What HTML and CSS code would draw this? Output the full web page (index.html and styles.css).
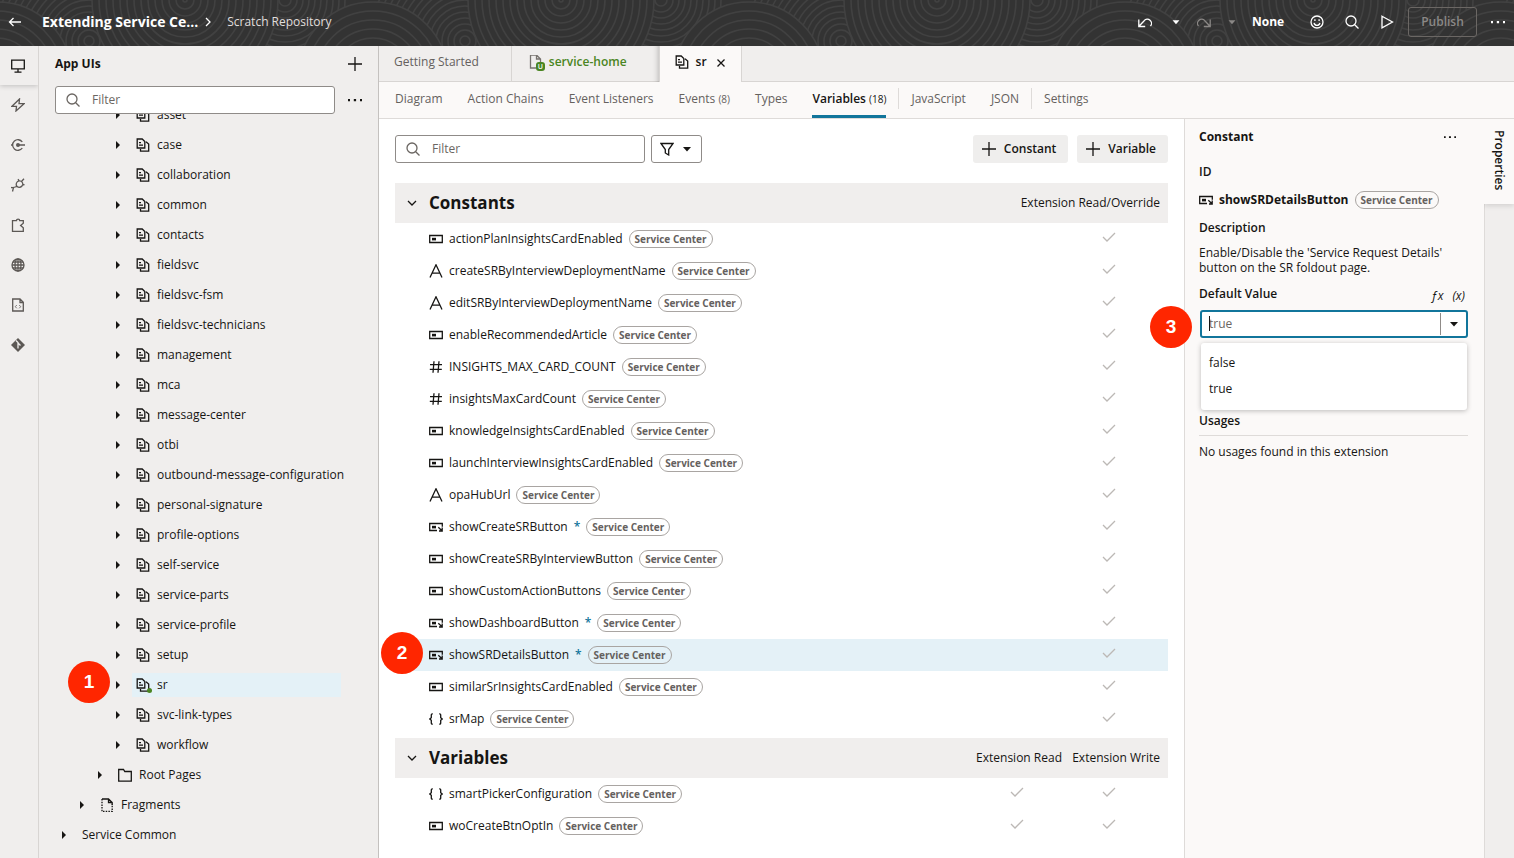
FILE: index.html
```
<!DOCTYPE html>
<html lang="en">
<head>
  <meta charset="UTF-8" />
  <meta name="viewport" content="width=device-width, initial-scale=1" />
  <title>sr - Variables</title>
  <link rel="stylesheet" href="styles.css">
</head>
<body>

  <!-- Icon sprite -->
  <svg class="sprite" aria-hidden="true">
    <symbol id="i-back" viewBox="0 0 14 14"><path d="M13 7H1.5M5.5 3l-4 4 4 4"/></symbol>
    <symbol id="i-chevron" viewBox="0 0 14 14"><path d="M5 3l4 4-4 4"/></symbol>
    <symbol id="i-down" viewBox="0 0 14 14"><path d="M3 5l4 4 4-4"/></symbol>
    <symbol id="i-caret" viewBox="0 0 14 14"><path class="solid" d="M3 5h8L7 9.500z"/></symbol>
    <symbol id="i-right" viewBox="0 0 14 14"><path class="solid" d="M5 3l4 4-4 4z"/></symbol>
    <symbol id="i-undo" viewBox="0 0 14 14"><path d="M.8 4.500v7h6.400M1 11.300l5.200-5.600a3.900 3.900 0 0 1 6.300 5.300"/></symbol>
    <symbol id="i-redo" viewBox="0 0 14 14"><path d="M13.200 4.500v7H6.800M13 11.300L7.800 5.700A3.900 3.900 0 0 0 1.500 11"/></symbol>
    <symbol id="i-smile" viewBox="0 0 14 14"><circle cx="7" cy="7" r="6"/><path d="M4 8a3.100 3.100 0 0 0 6 0M4.900 4.300v1.600M9.100 4.300v1.600"/></symbol>
    <symbol id="i-search" viewBox="0 0 14 14"><circle cx="6" cy="6" r="5"/><path d="M9.700 9.700l3.800 3.800"/></symbol>
    <symbol id="i-play" viewBox="0 0 14 14"><path d="M2 1.200l10.500 5.800L2 12.800z"/></symbol>
    <symbol id="i-dots" viewBox="0 0 14 14"><path class="solid" d="M-.3 6h2.300v2.300H-.3zM5.800 6h2.300v2.300H5.800zM12 6h2.300v2.300H12z"/></symbol>
    <symbol id="i-plus" viewBox="0 0 14 14"><path d="M7 0v14M0 7h14"/></symbol>
    <symbol id="i-close" viewBox="0 0 14 14"><path d="M3.500 4.500l7 7M10.500 4.500l-7 7"/></symbol>
    <symbol id="i-filter" viewBox="0 0 14 14"><path d="M1 1.500h12L8.700 7.500V13l-3.400-2V7.500z"/></symbol>
    <symbol id="i-check" viewBox="0 0 14 14"><path d="M1 7l4 4 8-8"/></symbol>
    <symbol id="i-monitor" viewBox="0 0 14 14"><path d="M.7 1.200h12.600v8.600H.7zM7 10v3M3.500 13.200h7"/></symbol>
    <symbol id="i-bolt" viewBox="0 0 14 14"><path d="M8.500 1L1 8.300h4.500L5 13l8-7.300H8z"/></symbol>
    <symbol id="i-service" viewBox="0 0 14 14"><path d="M11.300 4A5.300 5.300 0 1 0 11.300 10M7 7h7M0 7h1.500"/><circle class="solid" cx="7" cy="7" r="2"/></symbol>
    <symbol id="i-plug" viewBox="0 0 14 14"><path d="M5.200 6.800c-.2-2.600 2-4.600 4.300-3.800s3 3.300 1.500 5-4.300 1.800-5.300.2zM8.200 2.800L7 1.200M11.300 6l2.200.8M10.700 3.300L13 .8M5.500 8.500c-1.500.8-2.500 1.300-5 1M2.500 9.700L1.500 13.500M0 9.700h3"/></symbol>
    <symbol id="i-puzzle" viewBox="0 0 14 14"><path d="M1.500 2.700h4a1.600 1.600 0 0 1 3.200 0h3.600v2.600L9.600 7.500l2.700 2.300v3.500H1.500z"/></symbol>
    <symbol id="i-globe" viewBox="0 0 14 14"><circle cx="7" cy="7" r="6"/><ellipse cx="7" cy="7" rx="3" ry="6"/><path d="M7 1v12M1 7h12M2 4h10M2 10h10"/></symbol>
    <symbol id="i-code" viewBox="0 0 14 14"><path d="M1.700 1H9l3.300 3.300V13H1.700zM9 1v3.500h3.300"/><path class="thin" d="M5.800 7L4.300 8.700l1.500 1.600M8.200 7l1.500 1.700-1.500 1.600"/></symbol>
    <symbol id="i-git" viewBox="0 0 14 14"><path class="solid" d="M7 0l7 7-7 7-7-7z"/><path class="branch" d="M5 2.500l2 2v6M7 5l2.500 2.500"/></symbol>
    <symbol id="i-flow" viewBox="0 0 14 14"><path d="M1.200 1h5l2.600 2.600V10H1.200zM3 4.700h2M3 7.200h4M10 3.700l2.700 2.300v7.200H4.500V11"/></symbol>
    <symbol id="i-folder" viewBox="0 0 14 14"><path d="M.7 1.500h4.800l1.300 2h6.500v9.700H.7z"/></symbol>
    <symbol id="i-fragment" viewBox="0 0 14 14"><path d="M2 1h6.500l3.700 3.500V7M8.500 1v3.500h3.700"/><path stroke-dasharray="1.500 1.200" d="M2 1v12.500h10.200V6"/></symbol>
    <symbol id="i-page" viewBox="0 0 14 14"><path d="M7 13H1.500V0h6l4 4v4M7.500 0v4h4"/></symbol>
    <symbol id="i-bool" viewBox="0 0 14 14"><path d="M.7 3.500h12.600v7H.7z"/><path class="solid" d="M3 5.800h4v2.600H3z"/></symbol>
    <symbol id="i-boolx" viewBox="0 0 14 14"><path d="M8 10.500H.7v-7h12.600v3.200M9.300 7.300l3.700 3.400M13.200 7.500v3.500H10"/><path class="solid" d="M3 5.800h4v2.600H3z"/></symbol>
    <symbol id="i-string" viewBox="0 0 14 14"><path d="M1 13.500L7 .8l6 12.700M3.200 9.200h7.600"/></symbol>
    <symbol id="i-number" viewBox="0 0 14 14"><path d="M5 1.200L4 12.800M10 1.200L9 12.800M1 4.700h12M.8 9.300h12"/></symbol>
    <symbol id="i-object" viewBox="0 0 14 14"><path d="M3.800 1.800H3.300Q2.300 1.800 2.300 2.800v2.900L.8 7l1.500 1.300v2.900q0 1 1 1h.5M10.200 1.800h.5q1 0 1 1v2.900L13.200 7l-1.500 1.300v2.900q0 1-1 1h-.5"/></symbol>
  </svg>

  <header class="topbar">
    <svg class="topbar-art" aria-hidden="true">
      <defs>
        <pattern id="rings" width="376" height="46" x="-3" patternUnits="userSpaceOnUse"></pattern>
      </defs>
      <rect width="100%" height="100%" fill="url(#rings)"/>
    </svg>
    <button class="icon-btn back" aria-label="Back"><svg class="icon"><use href="#i-back"/></svg></button>
    <h1>Extending Service Ce...</h1>
    <svg class="icon crumb"><use href="#i-chevron"/></svg>
    <a href="#" class="repo">Scratch Repository</a>
    <div class="actions">
      <button class="icon-btn" aria-label="Undo"><svg class="icon"><use href="#i-undo"/></svg></button>
      <button class="icon-btn tiny" aria-label="Undo history"><svg class="icon small"><use href="#i-caret"/></svg></button>
      <button class="icon-btn tiny" aria-label="Redo" disabled><svg class="icon"><use href="#i-redo"/></svg></button>
      <button class="icon-btn tiny" aria-label="Redo history" disabled><svg class="icon small"><use href="#i-caret"/></svg></button>
      <button class="env">None</button>
      <button class="icon-btn" aria-label="Feedback"><svg class="icon"><use href="#i-smile"/></svg></button>
      <button class="icon-btn" aria-label="Search"><svg class="icon"><use href="#i-search"/></svg></button>
      <button class="icon-btn" aria-label="Preview"><svg class="icon"><use href="#i-play"/></svg></button>
      <button class="publish" disabled>Publish</button>
      <button class="icon-btn more" aria-label="More"><svg class="icon"><use href="#i-dots"/></svg></button>
    </div>
  </header>

  <div class="workspace">
    <nav class="rail" aria-label="Navigator">
      <button class="active" aria-label="App UIs"><svg class="icon"><use href="#i-monitor"/></svg></button>
      <button aria-label="Actions"><svg class="icon"><use href="#i-bolt"/></svg></button>
      <button aria-label="Services"><svg class="icon"><use href="#i-service"/></svg></button>
      <button aria-label="Connections"><svg class="icon"><use href="#i-plug"/></svg></button>
      <button aria-label="Components"><svg class="icon"><use href="#i-puzzle"/></svg></button>
      <button aria-label="Translations"><svg class="icon"><use href="#i-globe"/></svg></button>
      <button aria-label="Source"><svg class="icon"><use href="#i-code"/></svg></button>
      <button aria-label="Git"><svg class="icon"><use href="#i-git"/></svg></button>
    </nav>

    <aside class="sidebar">
      <div class="side-head">
        <h2>App UIs</h2>
        <button aria-label="Add"><svg class="icon"><use href="#i-plus"/></svg></button>
      </div>
      <div class="side-filter">
        <label class="search">
          <svg class="icon"><use href="#i-search"/></svg>
          <input type="text" placeholder="Filter" aria-label="Filter App UIs">
        </label>
        <button aria-label="More"><svg class="icon"><use href="#i-dots"/></svg></button>
      </div>
      <div class="tree-wrap">
        <ul class="tree" id="tree"></ul>
      </div>
    </aside>

    <div class="editor">
      <div class="tabs">
        <button class="tab first">Getting Started</button>
        <button class="tab home"><span class="page-icon"><svg class="icon"><use href="#i-page"/></svg><span class="u">U</span></span>service-home</button>
        <button class="tab current"><svg class="icon"><use href="#i-flow"/></svg>sr<svg class="icon"><use href="#i-close"/></svg></button>
      </div>
      <nav class="subnav">
        <a href="#">Diagram</a>
        <a href="#">Action Chains</a>
        <a href="#">Event Listeners</a>
        <a href="#">Events <small>(8)</small></a>
        <a href="#">Types</a>
        <a href="#" class="current">Variables <small>(18)</small></a>
        <a href="#" class="divided">JavaScript</a>
        <a href="#">JSON</a>
        <a href="#" class="divided">Settings</a>
      </nav>

      <div class="panes">
        <main class="content">
          <div class="toolbar">
            <label class="search">
              <svg class="icon"><use href="#i-search"/></svg>
              <input type="text" placeholder="Filter" aria-label="Filter variables">
            </label>
            <button class="filter-btn" aria-label="Filter options"><svg class="icon"><use href="#i-filter"/></svg><svg class="icon"><use href="#i-caret"/></svg></button>
            <div class="add">
              <button><svg class="icon"><use href="#i-plus"/></svg>Constant</button>
              <button><svg class="icon"><use href="#i-plus"/></svg>Variable</button>
            </div>
          </div>

          <table>
            <thead>
              <tr>
                <th><button class="toggle"><svg class="icon"><use href="#i-down"/></svg>Constants</button></th>
                <th class="override">Extension Read/Override</th>
              </tr>
            </thead>
            <tbody id="constants"></tbody>
          </table>

          <table>
            <thead>
              <tr>
                <th><button class="toggle"><svg class="icon"><use href="#i-down"/></svg>Variables</button></th>
                <th class="read">Extension Read</th>
                <th class="write">Extension Write</th>
              </tr>
            </thead>
            <tbody id="variables"></tbody>
          </table>
        </main>

        <aside class="props">
          <div class="props-head">
            <h2>Constant</h2>
            <button aria-label="More"><svg class="icon small"><use href="#i-dots"/></svg></button>
          </div>
          <h3>ID</h3>
          <div class="prop-id">
            <svg class="icon"><use href="#i-boolx"/></svg>
            <strong>showSRDetailsButton</strong>
            <span class="badge">Service Center</span>
          </div>
          <h3>Description</h3>
          <p class="desc">Enable/Disable the 'Service Request Details' button on the SR foldout page.</p>
          <div class="value-head">
            <label for="default-value">Default Value</label>
            <button aria-label="Expression"><i>ƒx</i></button>
            <button aria-label="Variable"><i>(x)</i></button>
          </div>
          <div class="combo">
            <span class="marker three">3</span>
            <input type="text" id="default-value" placeholder="true" role="combobox" aria-expanded="true" aria-controls="value-list">
            <span class="cursor"></span>
            <button aria-label="Open list"><svg class="icon"><use href="#i-caret"/></svg></button>
            <ul class="options" id="value-list" role="listbox">
              <li role="option">false</li>
              <li role="option">true</li>
            </ul>
          </div>
          <h3 class="usages">Usages</h3>
          <p class="none">No usages found in this extension</p>
        </aside>

        <div class="right-rail">
          <button>Properties</button>
        </div>
      </div>
    </div>
  </div>

  <script>
    const flows = ['asset', 'case', 'collaboration', 'common', 'contacts', 'fieldsvc', 'fieldsvc-fsm',
      'fieldsvc-technicians', 'management', 'mca', 'message-center', 'otbi',
      'outbound-message-configuration', 'personal-signature', 'profile-options', 'self-service',
      'service-parts', 'service-profile', 'setup', 'sr', 'svc-link-types', 'workflow'];

    const constants = [
      ['bool', 'actionPlanInsightsCardEnabled'],
      ['string', 'createSRByInterviewDeploymentName'],
      ['string', 'editSRByInterviewDeploymentName'],
      ['bool', 'enableRecommendedArticle'],
      ['number', 'INSIGHTS_MAX_CARD_COUNT'],
      ['number', 'insightsMaxCardCount'],
      ['bool', 'knowledgeInsightsCardEnabled'],
      ['bool', 'launchInterviewInsightsCardEnabled'],
      ['string', 'opaHubUrl'],
      ['boolx', 'showCreateSRButton'],
      ['bool', 'showCreateSRByInterviewButton'],
      ['bool', 'showCustomActionButtons'],
      ['boolx', 'showDashboardButton'],
      ['boolx', 'showSRDetailsButton'],
      ['bool', 'similarSrInsightsCardEnabled'],
      ['object', 'srMap']
    ];

    const variables = [
      ['object', 'smartPickerConfiguration'],
      ['bool', 'woCreateBtnOptIn']
    ];

    function icon(name) {
      return `<svg class="icon"><use href="#i-${name}"/></svg>`;
    }

    function treeItem(name, iconName, level) {
      const selected = name === 'sr';
      return `<li class="level-${level}${selected ? ' selected' : ''}">
        ${selected ? '<span class="marker one">1</span>' : ''}
        ${icon('right')}
        <span class="node">${iconName ? icon(iconName) : ''}${name}</span>
      </li>`;
    }

    function row(type, name, checks) {
      const selected = name === 'showSRDetailsButton';
      const star = type === 'boolx' ? '<span class="star">*</span>' : '';
      return `<tr class="${selected ? 'selected' : ''}">
        <td><div class="var">${selected ? '<span class="marker two">2</span>' : ''}
          ${icon(type)}<span>${name}</span>${star}<span class="badge">Service Center</span></div></td>
        ${`<td class="check">${icon('check')}</td>`.repeat(checks)}
      </tr>`;
    }

    // concentric rings, the biggest one is filled so it hides what is below
    function rings(cx, cy, max, step) {
      let out = '';
      for (let r = max; r > 0; r -= step) {
        out += `<circle cx="${cx}" cy="${cy}" r="${r}"/>`;
      }
      return out;
    }

    document.getElementById('tree').innerHTML =
      flows.map(name => treeItem(name, 'flow', 3)).join('') +
      treeItem('Root Pages', 'folder', 2) +
      treeItem('Fragments', 'fragment', 1) +
      treeItem('Service Common', '', 0);

    document.getElementById('constants').innerHTML = constants.map(c => row(c[0], c[1], 1)).join('');
    document.getElementById('variables').innerHTML = variables.map(v => row(v[0], v[1], 2)).join('');

    document.getElementById('rings').innerHTML =
      rings(92, 41, 95, 6) + rings(288, 0, 60, 6) +
      rings(0, 77, 75, 9) + rings(376, 77, 75, 9) + rings(188, 0, 93, 7);
  </script>

</body>
</html>
```
FILE: styles.css
```
* {
  box-sizing: border-box;
}

body {
  margin: 0;
  height: 100vh;
  display: flex;
  flex-direction: column;
  overflow: hidden;
  font-family: "Open Sans", "Noto Sans", sans-serif;
  font-size: 12px;
  line-height: 16px;
  color: #161513;
  background: #fff;
}

h1, h2, h3, p, ul {
  margin: 0;
  padding: 0;
}

h2, h3 {
  font-size: 12px;
}

ul {
  list-style: none;
}

button, input {
  font: inherit;
  color: inherit;
}

button {
  display: flex;
  align-items: center;
  justify-content: center;
  padding: 0;
  border: 0;
  background: none;
  cursor: pointer;
}

a {
  color: inherit;
  text-decoration: none;
}

.sprite {
  position: absolute;
  width: 0;
  height: 0;
}

.icon {
  width: 14px;
  height: 14px;
  flex: none;
  overflow: visible;
  fill: none;
  stroke: currentColor;
  stroke-width: 1.3;
}

.icon.small {
  width: 12px;
  height: 12px;
}

.solid {
  fill: currentColor;
  stroke: none;
}

.thin {
  stroke-width: 0.8;
}

.branch {
  stroke: #f0eeed;
}

/* top bar */
.topbar {
  position: relative;
  display: flex;
  align-items: center;
  flex: none;
  height: 46px;
  padding: 0 0 2px 8px;
  background: #333;
  color: #fff;
}

.topbar > * {
  position: relative;
}

.topbar .topbar-art {
  position: absolute;
  left: 0;
  top: 0;
  width: 100%;
  height: 100%;
}

.topbar-art circle {
  fill: #333;
  stroke: #414141;
  stroke-width: 1.5;
}

.topbar h1 {
  margin-left: 20px;
  font-size: 14px;
  line-height: 20px;
}

.crumb {
  margin: 0 12px 0 3px;
}

.repo {
  color: #e0dedc;
}

.actions {
  display: flex;
  align-items: center;
  margin-left: auto;
}

.actions .icon-btn {
  width: 35px;
  height: 30px;
}

.actions .tiny {
  width: 28px;
}

.actions .more {
  width: 33px;
}

.topbar button:disabled {
  color: #8b8886;
}

.env {
  width: 53px;
  padding-left: 6px;
  justify-content: flex-start;
  font-weight: 700;
}

.publish {
  width: 69px;
  height: 30px;
  margin: 0 4px;
  border: 1px solid #6b6764;
  border-radius: 3px;
  font-weight: 600;
}

/* left side */
.workspace {
  display: flex;
  flex: 1;
  min-height: 0;
}

.rail {
  width: 39px;
  flex: none;
  background: #f0eeed;
  border-right: 1px solid #d8d5d3;
  color: #5c5855;
}

.rail button {
  width: 36px;
  height: 40px;
}

.rail .active {
  width: 38px;
  height: 39px;
  padding-right: 2px;
  color: #161513;
  box-shadow: 0 1px 5px rgba(0, 0, 0, 0.2);
  clip-path: inset(0 0 -8px 0);
}

.sidebar {
  width: 340px;
  flex: none;
  display: flex;
  flex-direction: column;
  background: #f0eeed;
  border-right: 1px solid #c4c1bf;
}

.side-head, .side-filter {
  display: flex;
  align-items: center;
  padding: 0 16px;
}

.side-head {
  height: 36px;
  justify-content: space-between;
}

.side-filter {
  justify-content: space-between;
  padding-top: 4px;
}

.search {
  display: flex;
  align-items: center;
  gap: 12px;
  height: 28px;
  padding: 0 10px;
  border: 1px solid #8f8b88;
  border-radius: 3px;
  background: #fff;
  color: #6b6662;
}

.search input {
  flex: 1;
  min-width: 0;
  padding: 0;
  border: 0;
  outline: 0;
  background: none;
}

input::placeholder {
  color: #6b6662;
  opacity: 1;
}

.side-filter .search {
  width: 280px;
}

.tree-wrap {
  flex: 1;
  min-height: 0;
  overflow: hidden;
}

/* list is scrolled by half a row */
.tree {
  margin-top: -14px;
  padding-right: 37px;
}

.tree li {
  position: relative;
  display: flex;
  align-items: center;
  gap: 7px;
  height: 30px;
}

.level-0 { padding-left: 18px; }
.level-1 { padding-left: 36px; }
.level-2 { padding-left: 54px; }
.level-3 { padding-left: 72px; }

.node {
  display: flex;
  align-items: center;
  flex: 1;
  gap: 7px;
  height: 24px;
  padding-left: 4px;
  white-space: nowrap;
}

.selected .node {
  position: relative;
  background: #e4f1f7;
}

.selected .node::after {
  content: "";
  position: absolute;
  left: 15px;
  bottom: 4px;
  width: 5px;
  height: 5px;
  border-radius: 50%;
  background: #4a8522;
}

/* numbered callouts */
.marker {
  position: absolute;
  z-index: 2;
  display: flex;
  align-items: center;
  justify-content: center;
  width: 42px;
  height: 42px;
  border-radius: 50%;
  background: #ff2600;
  color: #fff;
  font: bold 19px/20px "Liberation Sans", Arial, sans-serif;
}

.marker.one {
  left: 29px;
  top: -9px;
}

.marker.two {
  left: -14px;
  top: -14px;
}

.marker.three {
  left: -52px;
  top: -6px;
}

/* editor */
.editor {
  display: flex;
  flex-direction: column;
  flex: 1;
  min-width: 0;
}

.tabs {
  display: flex;
  height: 36px;
  background: #f0eeed;
  box-shadow: inset 0 -1px #d8d5d3;
}

.tab {
  gap: 7px;
  padding: 0 32px 4px 15px;
  border-right: 1px solid #d8d5d3;
  color: #65615e;
  font-weight: 500;
}

.tab.home {
  gap: 6px;
  padding: 0 32px 4px 17px;
  color: #4a8522;
  font-weight: 600;
  box-shadow: inset -6px 0 6px -6px rgba(0, 0, 0, 0.3), inset 0 -1px #d8d5d3;
}

.tab.current {
  padding: 0 13px 4px 15px;
  background: #fbf9f8;
  color: #161513;
  font-weight: 600;
}

.page-icon {
  position: relative;
  display: flex;
  color: #77736f;
}

.u {
  position: absolute;
  left: 7px;
  top: 7px;
  width: 9px;
  height: 9px;
  border-radius: 3px;
  background: #4a8522;
  color: #fff;
  font-size: 7px;
  line-height: 9px;
  text-align: center;
}

.subnav {
  display: flex;
  gap: 25px;
  height: 37px;
  padding-left: 16px;
  background: #fbf9f8;
  border-bottom: 1px solid #dedbd9;
  color: #65615e;
  font-weight: 500;
}

.subnav a {
  position: relative;
  padding-top: 9px;
  white-space: nowrap;
}

.subnav small {
  font-size: 10px;
  font-weight: 400;
}

.subnav .current {
  color: #161513;
  font-weight: 600;
  border-bottom: 3px solid #11759b;
}

.divided::before {
  content: "";
  position: absolute;
  left: -13px;
  top: 6px;
  height: 21px;
  border-left: 1px solid #dedbd9;
}

.panes {
  display: flex;
  flex: 1;
  min-height: 0;
}

.content {
  flex: 1;
  min-width: 0;
  padding: 16px;
}

.toolbar {
  display: flex;
  gap: 6px;
  margin-bottom: 20px;
}

.toolbar .search {
  width: 250px;
}

.filter-btn {
  gap: 6px;
  width: 51px;
  height: 28px;
  border: 1px solid #8f8b88;
  border-radius: 3px;
}

.add {
  display: flex;
  gap: 9px;
  margin-left: auto;
}

.add button {
  gap: 8px;
  height: 28px;
  padding: 0 12px 0 9px;
  border-radius: 3px;
  background: #efeeed;
  font-weight: 600;
}

table {
  width: 100%;
  margin-bottom: 3px;
  border-collapse: collapse;
  table-layout: fixed;
}

th {
  height: 40px;
  padding: 0 8px 0 0;
  background: #f0eeed;
  font-weight: 400;
  text-align: right;
  white-space: nowrap;
}

.toggle {
  gap: 10px;
  padding-left: 10px;
  font-size: 17px;
  line-height: 24px;
  font-weight: 700;
}

.override {
  width: 153px;
}

.write {
  width: 96px;
}

.read {
  width: 100px;
  padding-right: 10px;
}

td {
  height: 32px;
  padding: 0;
}

.check {
  padding: 0 52px 4px 0;
  text-align: right;
  line-height: 0;
  color: #bcb8b5;
}

.check:nth-last-child(2) {
  padding-right: 48px;
}

.check .icon {
  display: inline-block;
  vertical-align: middle;
}

tr.selected {
  background: #e4f1f7;
}

.var {
  position: relative;
  display: flex;
  align-items: center;
  gap: 6px;
  padding-left: 34px;
}

.star {
  color: #11759b;
  font-weight: 600;
}

.badge {
  padding: 0 5px;
  border: 1px solid #a9a5a2;
  border-radius: 9px;
  color: #65615e;
  font-size: 10px;
  font-weight: 700;
  white-space: nowrap;
}

/* properties */
.props {
  width: 300px;
  flex: none;
  padding: 8px 16px 0 14px;
  border-left: 1px solid #dedbd9;
  background: #fbf9f8;
}

.props-head, .prop-id, .value-head {
  display: flex;
  align-items: center;
}

.props-head {
  justify-content: space-between;
  height: 20px;
  margin-bottom: 16px;
  padding-right: 12px;
}

.props h3, .value-head label {
  font-weight: 600;
  line-height: 18px;
}

.prop-id {
  gap: 6px;
  height: 18px;
  margin: 10px 0;
}

.desc {
  margin: 8px 0 9px;
  line-height: 15px;
}

.value-head {
  gap: 9px;
  height: 20px;
  margin-bottom: 6px;
  padding-right: 3px;
}

.value-head label {
  flex: 1;
}

.value-head button {
  padding-top: 3px;
  font-weight: 500;
}

.combo {
  position: relative;
  display: flex;
  height: 28px;
  margin: 0 0 74px 1px;
  border: 2px solid #11759b;
  border-radius: 3px;
  background: #fff;
}

.combo input {
  flex: 1;
  min-width: 0;
  padding: 0 7px;
  border: 0;
  outline: 0;
  background: none;
}

.combo button {
  width: 26px;
  margin: 1px 0;
  border-left: 1px solid #8f8b88;
}

.cursor {
  position: absolute;
  left: 7px;
  top: 4px;
  height: 15px;
  border-left: 1px solid #161513;
}

.options {
  position: absolute;
  left: -1px;
  right: -1px;
  top: 31px;
  padding: 7px 8px 8px;
  border-radius: 3px;
  background: #fff;
  box-shadow: 0 1px 5px rgba(0, 0, 0, 0.25);
}

.options li {
  line-height: 26px;
}

.usages {
  padding-bottom: 5px;
  border-bottom: 1px solid #dedbd9;
}

.none {
  margin-top: 8px;
}

.right-rail {
  width: 30px;
  flex: none;
  background: #f0eeed;
  border-left: 1px solid #dedbd9;
}

.right-rail button {
  width: 30px;
  height: 85px;
  margin-left: -1px;
  padding-bottom: 3px;
  background: #fbf9f8;
  box-shadow: 0 2px 5px rgba(0, 0, 0, 0.12);
  clip-path: inset(0 0 -8px 0);
  writing-mode: vertical-rl;
  font-weight: 600;
}
```
